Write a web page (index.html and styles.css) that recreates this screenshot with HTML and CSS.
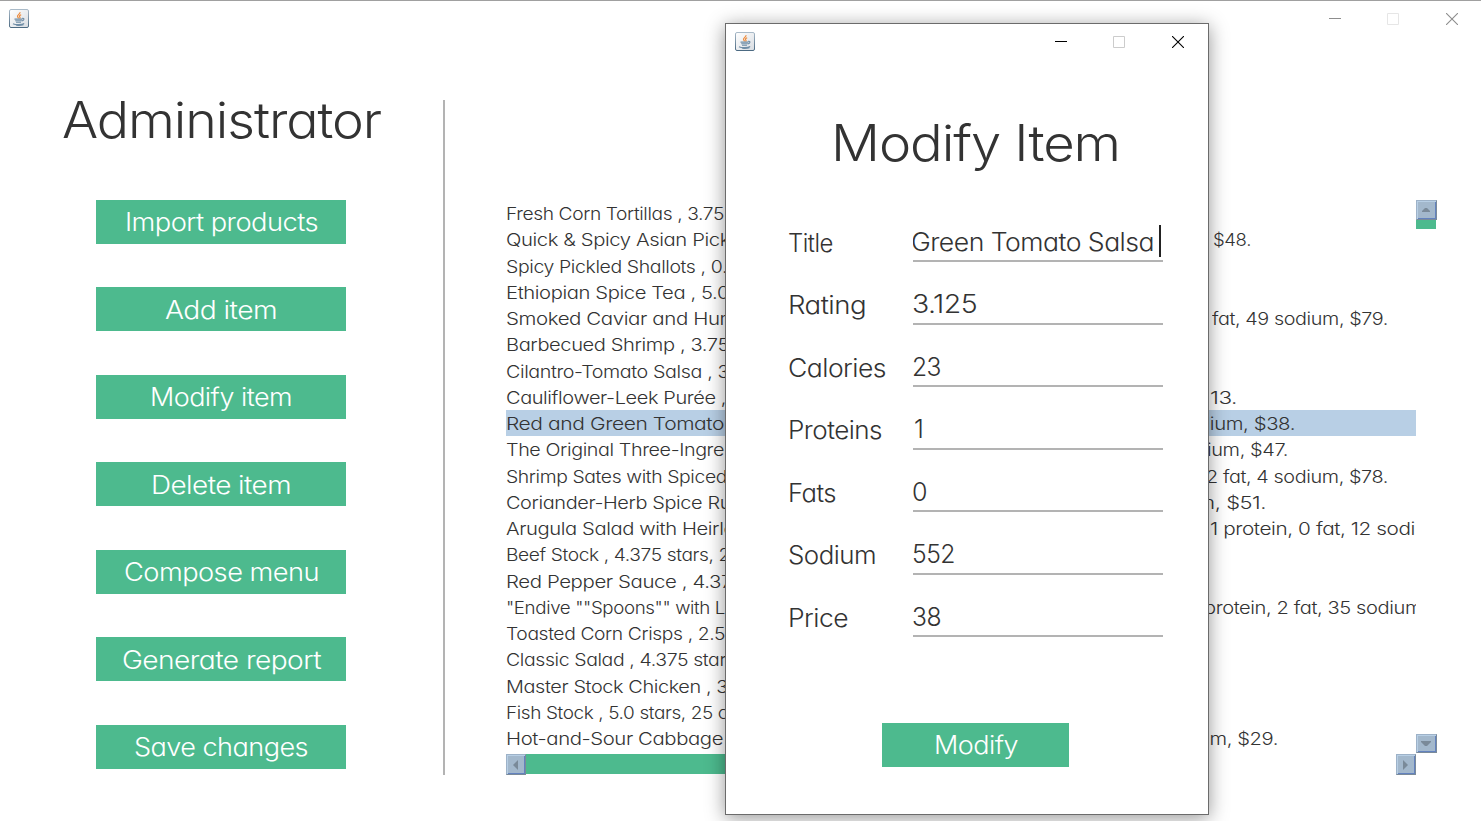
FILE: index.html
```html
<!DOCTYPE html>
<html lang="en">
<head>
<meta charset="utf-8">
<title>Administrator</title>
<link rel="stylesheet" href="styles.css">
</head>
<body>
<svg class="defs" width="0" height="0">
  <defs>
    <linearGradient id="tile" x1="0" y1="0" x2="1" y2="1"><stop offset="0" stop-color="#fff"/><stop offset="1" stop-color="#d9dde2"/></linearGradient>
    <linearGradient id="edge" x1="0" y1="0" x2="0" y2="1"><stop offset="0" stop-color="#a9bac8"/><stop offset="1" stop-color="#4c6a82"/></linearGradient>
    <symbol id="java" viewBox="0 0 20 19">
      <rect x=".5" y=".5" width="19" height="18" rx="1.5" fill="url(#tile)" stroke="url(#edge)"/>
      <path d="M11 3.2c.5 1.8-3 2.500-2.500 4.300.1.600.7 1.200 1.100 1.900M12.200 5.800c-1.700.6-2.300 1.500-1.300 2.400.4.500.1 1-.3 1.400" fill="none" stroke="#ee8b3c" stroke-width="1.200"/>
      <path d="M5.500 10.100h8M6.200 11.800h6.600M7 13.200h5M13.300 9.400c2.400-.5 2 2.100-.4 2.500M4 14.700c2.500 1.400 9 1.200 11.200-.2M7 16.300c2.500.4 5.500.2 7.500-.5" fill="none" stroke="#6f8da6" stroke-width="1.100"/>
    </symbol>
    <symbol id="min" viewBox="0 0 12 12"><path d="M0 5.500h12" stroke="currentColor"/></symbol>
    <symbol id="max" viewBox="0 0 12 12"><path d="M.5.5h11v11H.5z" fill="none" stroke="currentColor"/></symbol>
    <symbol id="close" viewBox="0 0 12 12"><path d="M0 0l12 12M12 0L0 12" stroke="currentColor" stroke-width="1.100"/></symbol>
  </defs>
</svg>
<div class="window">
  <header class="titlebar">
    <svg class="app-icon"><use href="#java"/></svg>
    <div class="controls">
      <svg class="ctl ctl-min"><use href="#min"/></svg>
      <svg class="ctl ctl-off"><use href="#max"/></svg>
      <svg class="ctl"><use href="#close"/></svg>
    </div>
  </header>
  <main class="content">
    <nav class="menu">
      <h1 class="heading"><span data-fit="319">Administrator</span></h1>
      <div class="actions">
        <button class="btn"><span data-fit="193">Import products</span></button>
        <button class="btn"><span data-fit="112">Add item</span></button>
        <button class="btn"><span data-fit="142">Modify item</span></button>
        <button class="btn"><span data-fit="140">Delete item</span></button>
        <button class="btn"><span data-fit="195">Compose menu</span></button>
        <button class="btn"><span data-fit="199">Generate report</span></button>
        <button class="btn"><span data-fit="174">Save changes</span></button>
      </div>
    </nav>
    <section class="products">
      <ul class="list" id="list"></ul>
      <div class="vbar">
        <span class="arrow arrow-v"><svg viewBox="0 0 8 4"><path d="M0 4V3l3-3h2l3 3v1z"/></svg></span>
        <span class="vthumb"></span>
        <span class="arrow arrow-v arrow-down"><svg viewBox="0 0 10 5"><path d="M0 0v1l4 4h2l4-4V0z"/></svg></span>
      </div>
      <div class="hbar">
        <span class="arrow arrow-h"><svg viewBox="0 0 5 10"><path d="M5 0v10L0 5z"/></svg></span>
        <span class="hthumb"></span>
        <span class="arrow arrow-h arrow-right"><svg viewBox="0 0 5 10"><path d="M0 0v10l5-5z"/></svg></span>
      </div>
    </section>
  </main>
</div>
<div class="dialog">
  <header class="titlebar dialog-bar">
    <svg class="app-icon"><use href="#java"/></svg>
    <div class="controls">
      <svg class="ctl ctl-min"><use href="#min"/></svg>
      <svg class="ctl ctl-off"><use href="#max"/></svg>
      <svg class="ctl"><use href="#close"/></svg>
    </div>
  </header>
  <h2 class="heading dialog-title"><span data-fit="289">Modify Item</span></h2>
  <div class="form">
    <div class="field"><label><span data-fit="45">Title</span></label><div class="value value-active"><span data-fit="243">Green Tomato Salsa</span><i class="caret"></i></div></div>
    <div class="field"><label><span data-fit="78">Rating</span></label><div class="value"><span data-fit="65">3.125</span></div></div>
    <div class="field"><label><span data-fit="98">Calories</span></label><div class="value"><span data-fit="29">23</span></div></div>
    <div class="field"><label><span data-fit="94">Proteins</span></label><div class="value value-one"><span>1</span></div></div>
    <div class="field"><label><span data-fit="48">Fats</span></label><div class="value"><span data-fit="15">0</span></div></div>
    <div class="field"><label><span data-fit="88">Sodium</span></label><div class="value"><span data-fit="43">552</span></div></div>
    <div class="field"><label><span data-fit="60">Price</span></label><div class="value"><span data-fit="29">38</span></div></div>
  </div>
  <button class="btn btn-modify"><span data-fit="84">Modify</span></button>
</div>
<script src="app.js"></script>
</body>
</html>
```
FILE: styles.css
```css
* { box-sizing: border-box; }
body {
  margin: 0;
  height: 821px;
  overflow: hidden;
  background: #fff;
  color: #333;
  font-family: Inter, "Liberation Sans", sans-serif;
  font-weight: 300;
  font-feature-settings: "cv11" 1;
}
.defs { position: absolute; }
[data-fit] {
  display: inline-block;
  white-space: pre;
  text-align: left;
  letter-spacing: -.02em;
  transform-origin: left;
}

.window { height: 821px; border-top: 1px solid #a0a0a0; }
.titlebar {
  display: flex;
  justify-content: space-between;
  align-items: center;
  height: 36px;
  padding: 0 23px 0 9px;
  color: #8d8d8d;
}
.app-icon { width: 20px; height: 19px; margin-top: -1px; }
.controls { display: flex; gap: 47px; }
.ctl { width: 12px; height: 12px; }
.ctl-min { margin-right: -1px; }
.ctl-off { color: #e6e6e6; }

.content { display: flex; padding-top: 63px; }
.menu {
  width: 445px;
  height: 675px;
  border-right: 2px solid #b3b3b3;
}
.heading {
  margin: 0;
  font-size: 50px;
  font-weight: 300;
  line-height: 60px;
  text-align: center;
}
.menu .heading { height: 109.8px; margin-top: -10px; }
.actions {
  display: flex;
  flex-direction: column;
  gap: 43.5px;
  width: 250px;
  margin-left: 96px;
}
.btn {
  display: block;
  width: 250px;
  height: 44px;
  padding: .6px 0 0;
  border: 0;
  background: #4dba8e;
  color: #fff;
  font: inherit;
  font-size: 25px;
  line-height: 44px;
  text-align: center;
  font-feature-settings: inherit;
}

.products {
  display: grid;
  grid-template: 554px 21px / 910px 21px;
  margin: 100px 0 0 61px;
}
.list {
  margin: 0;
  padding: 0;
  list-style: none;
  font-size: 17.5px;
  line-height: 26.25px;
}
.row {
  display: grid;
  grid-template-columns: 220px 208px;
  justify-content: space-between;
  height: 26.25px;
  white-space: pre;
}
.row-selected { background: #b8cfe5; }
.cell { padding-top: 1px; overflow: hidden; }
.cell-name { padding-left: .4px; }

.vbar { display: flex; flex-direction: column; }
.arrow {
  display: flex;
  align-items: center;
  justify-content: center;
  background: #a3b8cc;
  border: 1px solid #9db2c8;
  border-right-color: #7a8a99;
  border-bottom-color: #7a8a99;
  box-shadow: inset 1px 1px #b8cfe5, inset -1px -1px #6382bf;
  fill: #7a8a99;
}
.arrow svg { flex: none; }
.arrow-v { width: 21px; height: 20px; }
.arrow-v svg { width: 8px; height: 4px; margin: 0 1px 0 0; }
.arrow-h { width: 20px; height: 21px; }
.arrow-h svg { width: 5px; height: 10px; margin-right: 1px; }
.arrow-down { height: 19px; margin: auto 0 1px; }
.arrow-down svg { width: 10px; height: 5px; }
.vthumb { width: 20px; height: 9px; background: #4dba8e; }
.hbar { display: flex; }
.hthumb { width: 400px; height: 20px; background: #4dba8e; }
.arrow-right { margin-left: auto; }

.dialog {
  position: absolute;
  left: 725px;
  top: 23px;
  width: 484px;
  height: 792px;
  border: 1px solid #6b6b6b;
  background: #fff;
  box-shadow: 0 3px 18px rgba(0, 0, 0, .42);
}
.dialog-bar { color: #000; padding-right: 24px; }
.dialog-bar .ctl-off { color: #ccc; }
.dialog-title { height: 136px; padding-top: 53px; }
.dialog-title span { margin-left: 17px; }
.form { padding-left: 61.6px; margin-top: 12px; }
.field {
  display: grid;
  grid-template-columns: 125.4px 250px;
  height: 62.5px;
  font-size: 25px;
  line-height: 38px;
}
.field label { padding-top: 15.9px; }
.value {
  display: flex;
  height: 54px;
  padding-top: 14.9px;
  border-bottom: 2px solid #b3b3b3;
  overflow: hidden;
}
.value span { flex: none; margin-left: -1px; }
.value-active span { margin-left: -2px; }
.value-one span { margin-left: 1px; }
.caret { width: 2px; height: 32px; margin: 2.4px 0 0 5px; background: #222; }
.btn-modify { width: 187px; margin: 77px 0 0 156px; }
```
FILE: app.js
```js
// [name text, name width, details text, details offset, details width]
const products = [
  ["Fresh Corn Tortillas , 3.75", 218],
  ["Quick & Spicy Asian Pick", 224, "$48.", 5, 38],
  ["Spicy Pickled Shallots , 0.", 221],
  ["Ethiopian Spice Tea , 5.0", 223],
  ["Smoked Caviar and Hum", 231, "fat, 49 sodium, $79.", 4, 176],
  ["Barbecued Shrimp , 3.75", 223],
  ["Cilantro-Tomato Salsa , 3", 223],
  ["Cauliflower-Leek Purée ,", 220, "13.", 2, 27],
  ["Red and Green Tomato", 218, "dium, $38.", -10, 97],
  ["The Original Three-Ingre", 218, "ium, $47.", -1, 81],
  ["Shrimp Sates with Spiced", 221, "2 fat, 4 sodium, $78.", -2, 182],
  ["Coriander-Herb Spice Ru", 225, "m, $51.", -12, 70],
  ["Arugula Salad with Heirlo", 229, "1 protein, 0 fat, 12 sodi", 2, 205],
  ["Beef Stock , 4.375 stars, 2", 224],
  ["Red Pepper Sauce , 4.37", 226],
  ["\"Endive \"\"Spoons\"\" with L", 219, "protein, 2 fat, 35 sodium", -4, 218],
  ["Toasted Corn Crisps , 2.5", 219],
  ["Classic Salad , 4.375 star", 220],
  ["Master Stock Chicken , 3", 222],
  ["Fish Stock , 5.0 stars, 25 c", 222],
  ["Hot-and-Sour Cabbage", 217, "um, $29.", -10, 80]
];
const selected = 8;

function cell(kind, text, width, offset) {
  const box = document.createElement("div");
  box.className = "cell " + kind;
  if (text) {
    const span = document.createElement("span");
    span.textContent = text;
    span.dataset.fit = width;
    if (offset) span.style.marginLeft = offset + "px";
    box.append(span);
  }
  return box;
}

const list = document.getElementById("list");
products.forEach(([name, width, details, offset, detailsWidth], i) => {
  const row = document.createElement("li");
  row.className = "row" + (i === selected ? " row-selected" : "");
  row.append(cell("cell-name", name, width), cell("cell-details", details, detailsWidth, offset));
  list.append(row);
});

// Widen each label's letterforms to its set width.
document.querySelectorAll("[data-fit]").forEach((el) => {
  const target = Number(el.dataset.fit);
  const natural = el.getBoundingClientRect().width;
  el.style.transform = `scaleX(${target / natural})`;
  el.style.marginRight = target - natural + "px";
});
```
